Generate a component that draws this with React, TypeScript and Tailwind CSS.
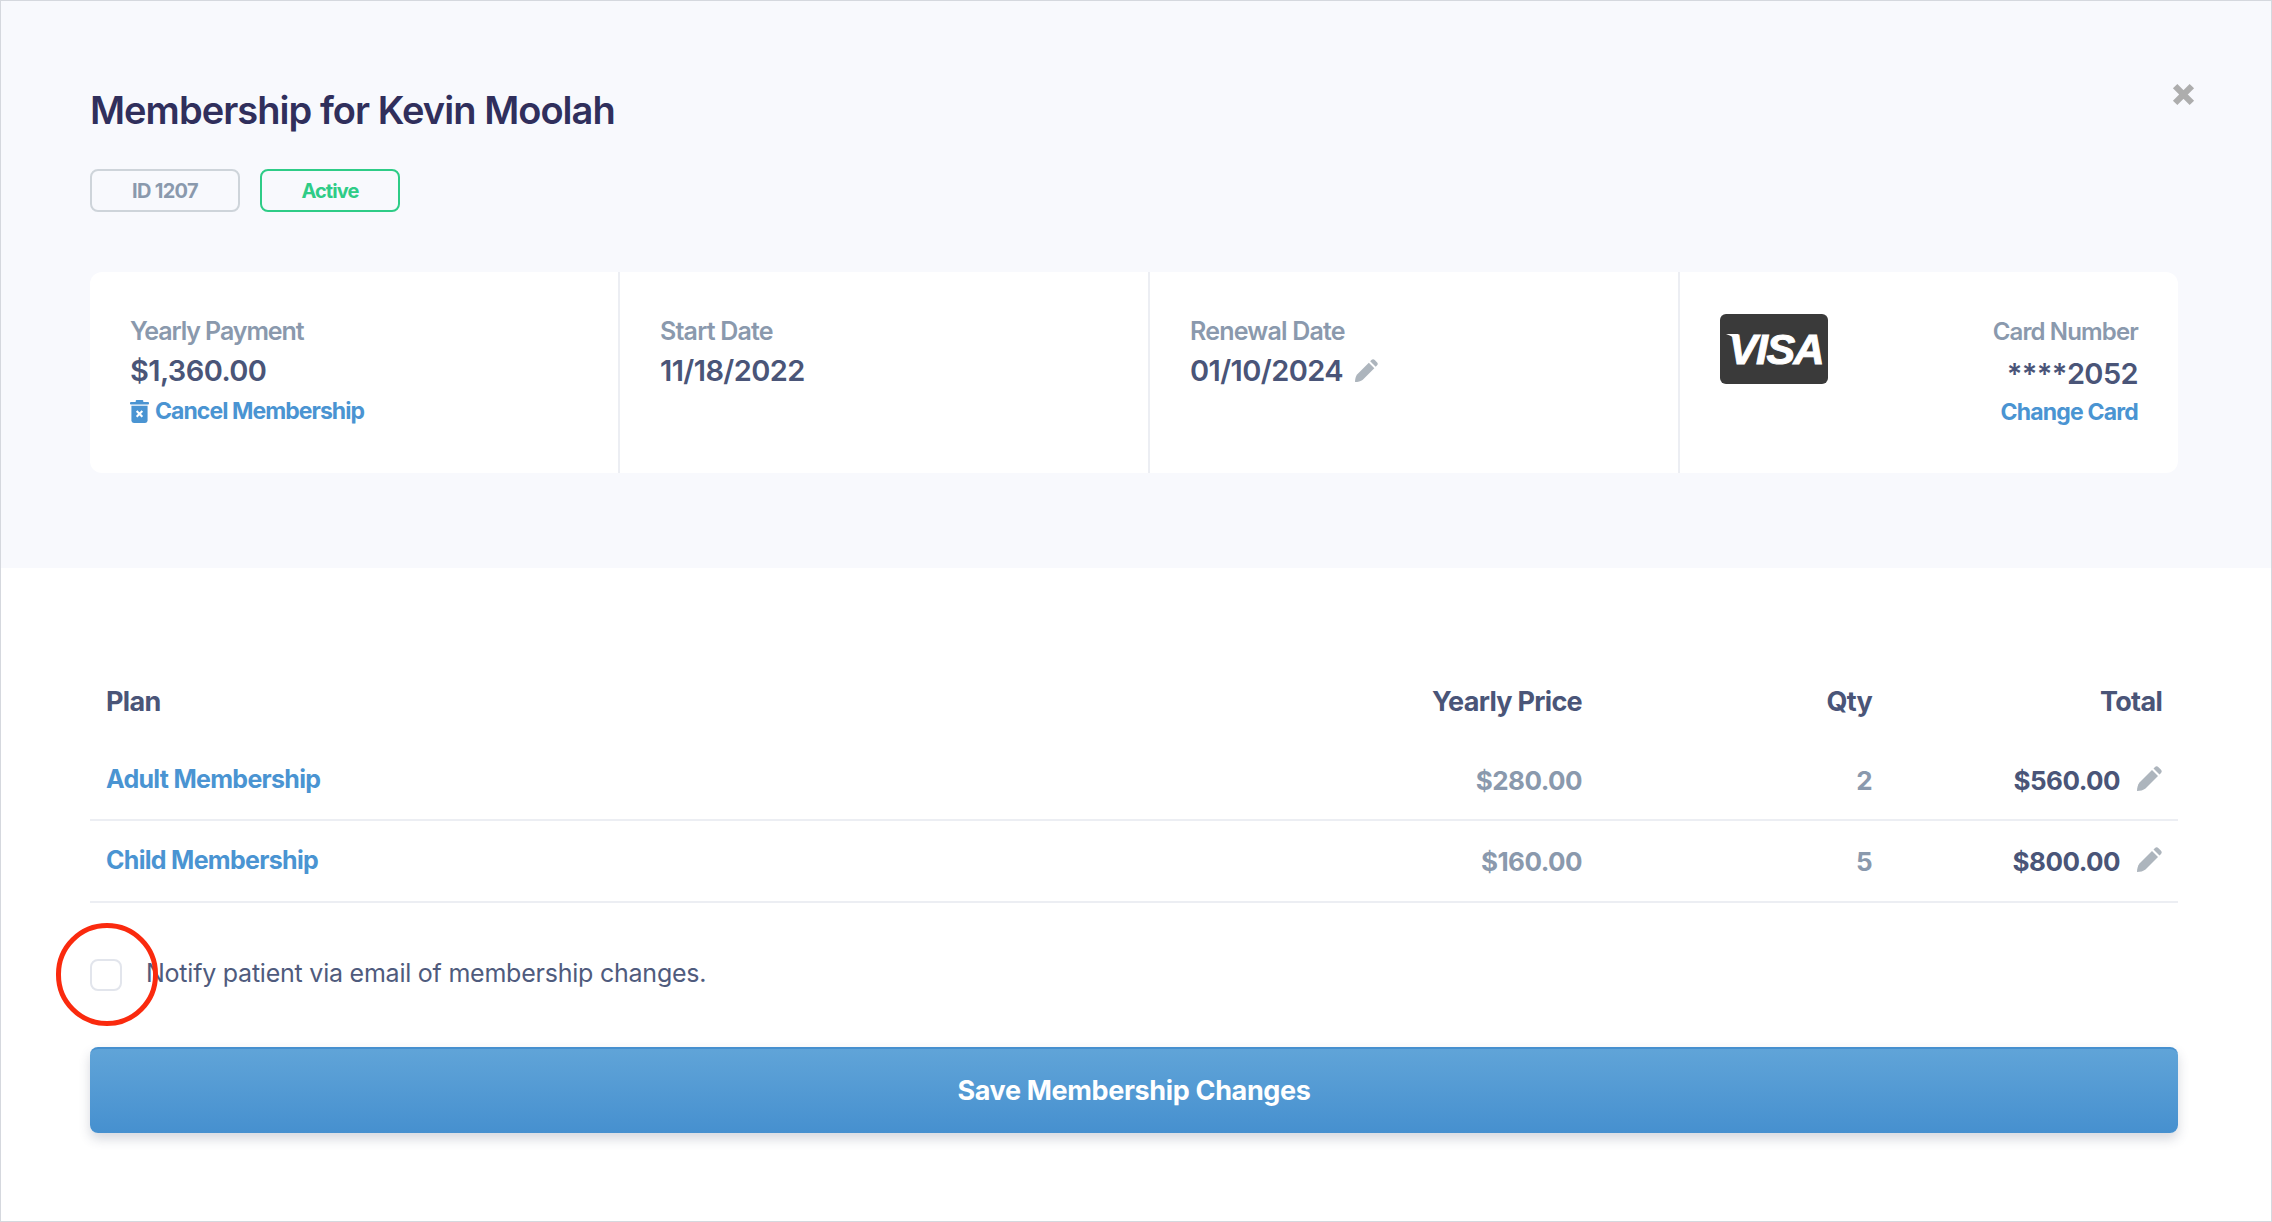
import React from "react";

const inter = "font-['Inter',sans-serif]";

const Pencil = ({ className }: { className: string }) => (
  <svg viewBox="0 0 25 25" className={`shrink-0 ${className}`} fill="#adb5bd">
    <path d="M0 25c0-3 .8-6.5 2.5-8.5L15 4l6 6L8.500 22.500C6.500 24.200 3 25 0 25z" />
    <path d="M16.500 2.500l1.300-1.300a2.600 2.600 0 0 1 3.700 0l2.300 2.300a2.600 2.600 0 0 1 0 3.700l-1.300 1.300z" />
  </svg>
);

const TrashIcon = () => (
  <svg viewBox="0 0 20 24" className="w-[19px] h-[23px] mr-[6px] shrink-0" fill="#4a94d2">
    <rect x="0" y="2" width="20" height="2.6" rx="1" />
    <rect x="6" y="0" width="8" height="3" rx="1" />
    <path d="M1.500 6h17v15.500a2.500 2.500 0 0 1-2.500 2.500H4a2.500 2.500 0 0 1-2.500-2.500z" />
    <path d="M7 11.500l6 6M13 11.500l-6 6" stroke="#fff" strokeWidth="2.2" />
  </svg>
);

const VisaLogo = () => (
  <div className="relative w-[108px] h-[70px] rounded-[6px] bg-[#3a3a3a] flex items-center justify-center overflow-hidden">
    <span className="font-['Liberation_Sans',sans-serif] font-bold italic text-white text-[43px] leading-none tracking-[-1.5px] pl-[4px] pt-[1px] [-webkit-text-stroke:1px_white]">
      VISA
    </span>
    <svg viewBox="0 0 20 12" className="absolute left-[6px] top-[20px] w-[20px] h-[12px]">
      <path d="M0 0h12l2 9C11 5 6 2 0 0z" fill="#fff" />
    </svg>
  </div>
);

const SummaryCell = ({ children, border = true }: { children: React.ReactNode; border?: boolean }) => (
  <div className={`pl-[40px] pt-[41px] ${border ? "border-r-2 border-[#eceef3]" : ""}`}>{children}</div>
);

const Label = ({ children, className = "text-[25px] tracking-[-0.8px]" }: { children: React.ReactNode; className?: string }) => (
  <div className={`leading-[36px] font-semibold text-[#8a99ad] ${className}`}>{children}</div>
);

const Value = ({ children }: { children: React.ReactNode }) => (
  <div className="text-[29px] leading-[40px] font-semibold tracking-[-0.6px] text-[#4a5578] mt-[2px]">{children}</div>
);

const plans = [
  { name: "Adult Membership", price: "$280.00", qty: 2, total: "$560.00", height: "h-[80px]" },
  { name: "Child Membership", price: "$160.00", qty: 5, total: "$800.00", height: "h-[82px]" },
];

const rowClass = "grid grid-cols-[1fr_300px_290px_290px] items-center pl-[16px] pr-[16px]";

export default function App() {
  return (
    <div className={`${inter} w-full h-[1222px] bg-white border border-[#d5d8de] overflow-hidden relative`}>
      {/* Header */}
      <div className="relative bg-[#f8f9fd] h-[567px] pl-[89px] pr-[93px] pt-[86px]">
        <svg viewBox="0 0 22 22" className="absolute left-[2171px] top-[82px] w-[23px] h-[23px]">
          <path d="M3 3l16 16M19 3L3 19" stroke="#adadad" strokeWidth="6" />
        </svg>
        <h1 className="text-[38px] leading-[46px] font-semibold tracking-[-0.95px] text-[#302f5c]">
          Membership for Kevin Moolah
        </h1>
        <div className="flex gap-[20px] mt-[36px]">
          <span className="w-[150px] h-[43px] rounded-[8px] border-2 border-[#ced4da] flex items-center justify-center text-[20px] font-bold tracking-[-0.7px] text-[#8a99ad]">
            ID 1207
          </span>
          <span className="w-[140px] h-[43px] rounded-[8px] border-2 border-[#2ecc87] flex items-center justify-center text-[20px] font-bold tracking-[-0.9px] text-[#2ecc87]">
            Active
          </span>
        </div>
        <div className="mt-[60px] h-[201px] bg-white rounded-[12px] grid grid-cols-[530px_530px_530px_1fr]">
          <SummaryCell>
            <Label className="text-[25px] tracking-[-1.1px]">Yearly Payment</Label>
            <Value>$1,360.00</Value>
            <div className="flex items-center h-[39px] mt-[1px] text-[23px] font-bold tracking-[-0.95px] text-[#4a94d2]">
              <TrashIcon />
              Cancel Membership
            </div>
          </SummaryCell>
          <SummaryCell>
            <Label>Start Date</Label>
            <Value>11/18/2022</Value>
          </SummaryCell>
          <SummaryCell>
            <Label>Renewal Date</Label>
            <div className="flex items-center gap-[12px]">
              <Value>01/10/2024</Value>
              <Pencil className="w-[23px] h-[23px]" />
            </div>
          </SummaryCell>
          <div className="flex justify-between pl-[40px] pr-[40px] pt-[42px]">
            <VisaLogo />
            <div className="text-right">
              <Label className="text-[24px] tracking-[-0.85px]">Card Number</Label>
              <div className="mt-[4px]">
                <Value>****2052</Value>
              </div>
              <div className="h-[39px] -mt-[1px] flex items-center justify-end text-[23px] font-bold tracking-[-0.8px] text-[#4a94d2]">
                Change Card
              </div>
            </div>
          </div>
        </div>
      </div>

      {/* Plans */}
      <div className="pl-[89px] pr-[93px] pt-[95px]">
        <div className={`${rowClass} h-[78px] text-[27px] font-bold tracking-[-0.7px] text-[#4a5578]`}>
          <span>Plan</span>
          <span className="text-right">Yearly Price</span>
          <span className="text-right">Qty</span>
          <span className="text-right">Total</span>
        </div>
        {plans.map((plan) => (
          <div key={plan.name} className={`${rowClass} ${plan.height} border-b-2 border-[#eceef3] text-[26px] font-bold tracking-[-0.55px]`}>
            <span className="text-[#4a94d2] text-[25px] tracking-[-0.7px]">{plan.name}</span>
            <span className="text-right text-[#8a99ad]">{plan.price}</span>
            <span className="text-right text-[#8a99ad]">{plan.qty}</span>
            <div className="flex items-center justify-end gap-[17px] text-[#4a5578]">
              {plan.total}
              <Pencil className="w-[25px] h-[25px] -mt-[3px]" />
            </div>
          </div>
        ))}

        <div className="relative flex items-center mt-[56px]">
          <input type="checkbox" className="appearance-none w-[32px] h-[32px] rounded-[8px] border-2 border-[#e2e5ec] bg-white shrink-0" />
          <span className="ml-[24px] -mt-[4px] text-[25px] leading-[32px] tracking-[-0.23px] text-[#4f5b7d]">
            Notify patient via email of membership changes.
          </span>
          {/* annotation drawn over the checkbox */}
          <div className="absolute left-[-34px] top-[-36px] w-[102px] h-[103px] rounded-full border-[5px] border-[#fa2a0e]" />
        </div>

        <button className="mt-[56px] w-full h-[86px] rounded-[8px] border-t-2 border-[#4690cf] bg-gradient-to-b from-[#60a4d8] to-[#4690cf] shadow-[0_6px_12px_rgba(50,60,90,0.2)] text-white text-[27px] font-bold tracking-[-0.35px]">
          Save Membership Changes
        </button>
      </div>
    </div>
  );
}
